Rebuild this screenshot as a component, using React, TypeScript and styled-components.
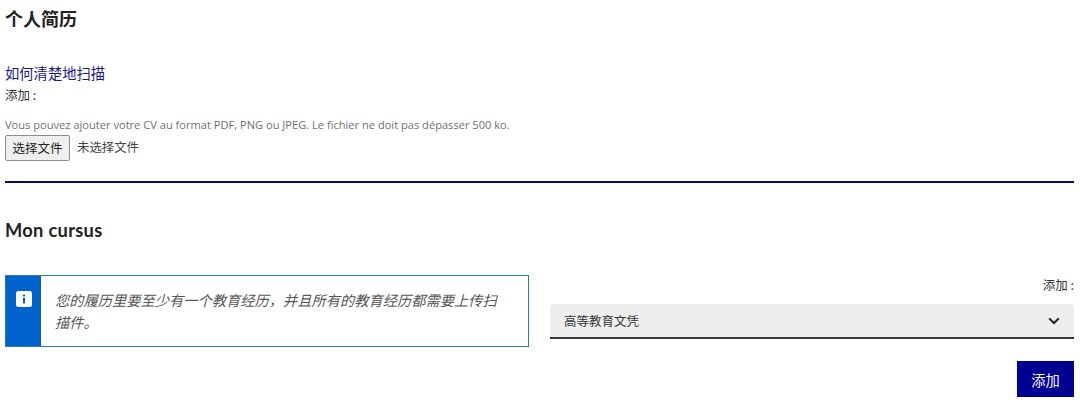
import React from 'react';
import styled, {createGlobalStyle} from 'styled-components';

const CJK = `"Noto Sans CJK SC", "Liberation Sans", sans-serif`;
const LATIN = `"Open Sans", "Noto Sans CJK SC", sans-serif`;
const HEADING = `"Lato", "Noto Sans CJK SC", sans-serif`;

const GlobalStyle = createGlobalStyle`
  html, body {
    margin: 0;
    padding: 0;
    background: #fff;
  }
`;

const Page = styled.div`
  width: 1069px;
  height: 408px;
  margin-left: 5px;
  overflow: hidden;
  font-family: ${CJK};
  color: #333;
`;

const Title = styled.h2`
  margin: 0;
  padding-top: 7px;
  height: 23px;
  line-height: 23px;
  font-size: 18px;
  font-weight: 700;
  color: #222;
`;

const HowToLink = styled.a`
  display: block;
  margin-top: 33px;
  height: 20px;
  line-height: 20px;
  font-size: 14.3px;
  color: #1a1a85;
  text-decoration: none;
`;

const Label = styled.label`
  display: block;
  height: 16px;
  line-height: 16px;
  margin-top: 4px;
  font-size: 12.5px;
  color: #333;
`;

const Hint = styled.p`
  margin: 14px 0 0;
  height: 16px;
  line-height: 16px;
  font-family: ${LATIN};
  font-size: 11.1px;
  color: #707070;
`;

const FileRow = styled.div`
  display: flex;
  align-items: center;
  gap: 7px;
  margin-top: 2px;
`;

const FileButton = styled.button`
  width: 65px;
  height: 26px;
  padding: 0 0 2px;
  box-sizing: border-box;
  border: 1px solid #8f8f8f;
  border-radius: 2px;
  background: #efefef;
  font-family: ${CJK};
  font-size: 12.5px;
  color: #222;
`;

const FileName = styled.span`
  margin-top: -2px;
  font-size: 12.4px;
  color: #444;
`;

const Rule = styled.hr`
  margin: 20px 0 0;
  height: 2px;
  border: 0;
  background: #0a0a80;
`;

const SectionTitle = styled.h2`
  margin: 36px 0 0;
  height: 22px;
  line-height: 22px;
  font-family: ${HEADING};
  font-size: 18.3px;
  font-weight: 700;
  letter-spacing: 0.3px;
  color: #222;
`;

const CursusRow = styled.div`
  display: flex;
  justify-content: space-between;
  align-items: flex-start;
  margin-top: 34px;
`;

const Alert = styled.div`
  display: flex;
  width: 524px;
  height: 72px;
  box-sizing: border-box;
  border: 1px solid #2f7a9e;
`;

const AlertSide = styled.div`
  flex: 0 0 35px;
  padding-top: 15px;
  box-sizing: border-box;
  display: flex;
  justify-content: center;
  align-items: flex-start;
  background: #0063cb;
`;

const AlertText = styled.p`
  margin: 0;
  padding: 13px 22px 0 14px;
  line-height: 22px;
  font-size: 14.25px;
  font-style: italic;
  color: #555;
`;

const AddColumn = styled.div`
  width: 524px;
  display: flex;
  flex-direction: column;
  align-items: flex-end;
`;

const AddLabel = styled(Label)`
  margin: 2px 0 0;
`;

const SelectBox = styled.div`
  width: 100%;
  height: 35px;
  margin-top: 11px;
  padding: 0 14px;
  box-sizing: border-box;
  display: flex;
  justify-content: space-between;
  align-items: center;
  background: #eee;
  border-radius: 4px 4px 0 0;
  border-bottom: 2px solid #3a3a3a;
  font-size: 12.5px;
  color: #333;
`;

const AddButton = styled.button`
  width: 57px;
  height: 36px;
  margin-top: 22px;
  padding: 0;
  border: 0;
  background: #000091;
  font-family: ${CJK};
  font-size: 14.3px;
  color: #f5f5fe;
`;

const InfoIcon = () => (
    <svg width="16" height="16" viewBox="0 0 16 16">
        <rect x="0" y="0" width="16" height="16" rx="2.5" fill="#fff"/>
        <rect x="7" y="3.5" width="2" height="2" fill="#0063cb"/>
        <rect x="7" y="7" width="2" height="5.5" fill="#0063cb"/>
    </svg>
);

const Chevron = () => (
    <svg width="12" height="8" viewBox="0 0 12 8">
        <path d="M1.2 1.4 L6 6 L10.8 1.4" fill="none" stroke="#222" strokeWidth="2"/>
    </svg>
);

export default function App() {
    return (
        <Page>
            <GlobalStyle/>
            <Title>个人简历</Title>
            <HowToLink href="#">如何清楚地扫描</HowToLink>
            <Label>添加 :</Label>
            <Hint>Vous pouvez ajouter votre CV au format PDF, PNG ou JPEG. Le fichier ne doit pas dépasser 500 ko.</Hint>
            <FileRow>
                <FileButton>选择文件</FileButton>
                <FileName>未选择文件</FileName>
            </FileRow>
            <Rule/>
            <SectionTitle>Mon cursus</SectionTitle>
            <CursusRow>
                <Alert>
                    <AlertSide><InfoIcon/></AlertSide>
                    <AlertText>您的履历里要至少有一个教育经历，并且所有的教育经历都需要上传扫描件。</AlertText>
                </Alert>
                <AddColumn>
                    <AddLabel>添加 :</AddLabel>
                    <SelectBox>
                        <span>高等教育文凭</span>
                        <Chevron/>
                    </SelectBox>
                    <AddButton>添加</AddButton>
                </AddColumn>
            </CursusRow>
        </Page>
    );
}
